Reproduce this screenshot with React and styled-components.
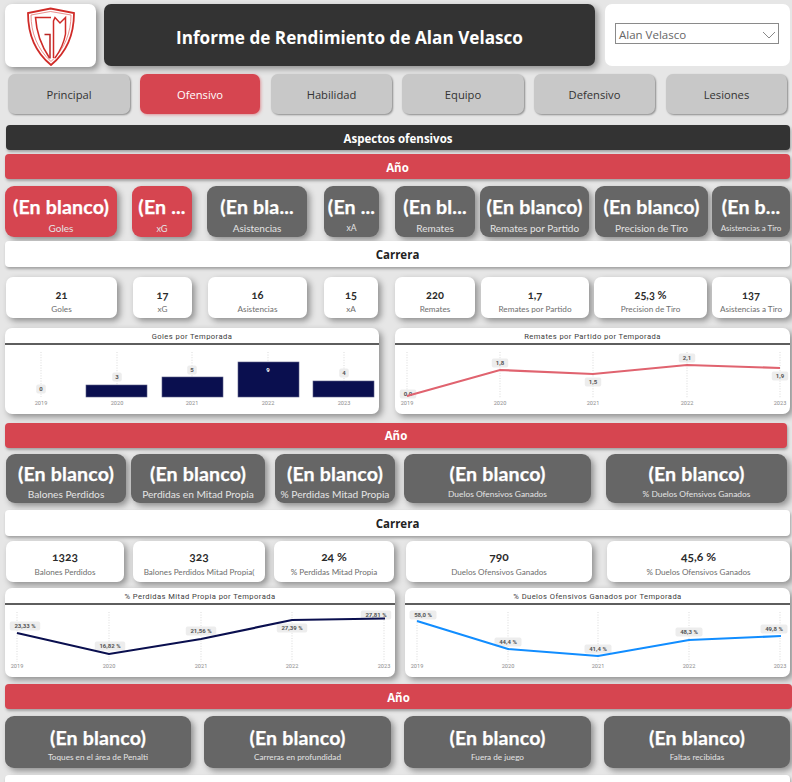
import React from "react";
import styled, { createGlobalStyle } from "styled-components";

const Global = createGlobalStyle`
  html, body { margin: 0; padding: 0; height: 782px; overflow: hidden; background: #e6e6e6; }
  * { box-sizing: border-box; }
  body { font-family: "Open Sans", "Noto Sans", sans-serif; }
`;

const RED = "#d64550";
const DARK = "#333333";
const GREY = "#666666";
const SHADOW = "3px 3px 6px rgba(0,0,0,.38)";

const Page = styled.div`
  width: 792px;
  height: 782px;
  overflow: hidden;
  display: flex;
  flex-direction: column;
`;

const Row = styled.div`
  display: flex;
  flex: none;
  height: ${(p) => p.$h}px;
  margin-top: ${(p) => p.$top}px;
`;

const LogoCard = styled.div`
  width: 91px;
  height: 63px;
  margin-left: 5px;
  background: #fff;
  border-radius: 7px;
  box-shadow: ${SHADOW};
  display: flex;
  align-items: center;
  justify-content: center;
`;

const TitleCard = styled.div`
  width: 491px;
  height: 62px;
  margin-left: 8px;
  background: ${DARK};
  border-radius: 7px;
  box-shadow: ${SHADOW};
  color: #fff;
  font-size: 17.15px;
  font-weight: 700;
  padding-top: 5px;
  display: flex;
  align-items: center;
  justify-content: center;
`;

const FilterCard = styled.div`
  width: 185px;
  height: 62px;
  margin-left: 10px;
  background: #fff;
  border-radius: 7px;
  padding: 19px 11px 0 10px;
`;

const Select = styled.div`
  height: 21px;
  border: 1px solid #8a8a8a;
  color: #666;
  font-size: 11.5px;
  line-height: 19px;
  padding: 2px 2px 0 3px;
  display: flex;
  justify-content: space-between;
  align-items: center;
`;

const Tab = styled.div`
  width: ${(p) => p.$w}px;
  margin-left: ${(p) => p.$left}px;
  border-radius: 7px;
  background: ${(p) => (p.$active ? RED : "#c8c8c8")};
  color: ${(p) => (p.$active ? "#fff" : "#333")};
  box-shadow: ${(p) => (p.$active ? "1px 1px 3px rgba(214,69,80,.5)" : "1px 1px 2px rgba(0,0,0,.4)")};
  font-size: 11.2px;
  display: flex;
  align-items: center;
  justify-content: center;
`;

const Bar = styled.div`
  flex: none;
  width: ${(p) => p.$w}px;
  height: ${(p) => p.$h}px;
  margin-top: ${(p) => p.$top}px;
  margin-left: ${(p) => p.$left}px;
  border-radius: 4px;
  background: ${(p) => p.$bg};
  color: ${(p) => p.$fg};
  font-size: 11.5px;
  font-weight: 700;
  padding-top: ${(p) => p.$pt}px;
  box-shadow: 1px 2px 3px rgba(0,0,0,.3);
  display: flex;
  align-items: center;
  justify-content: center;
`;

const Kpi = styled.div`
  width: ${(p) => p.$w}px;
  margin-left: ${(p) => p.$left}px;
  border-radius: 9px;
  background: ${(p) => p.$bg};
  color: #fff;
  box-shadow: ${SHADOW};
  display: flex;
  flex-direction: column;
  align-items: center;
  padding-top: ${(p) => p.$pad}px;
  overflow: hidden;
`;

const KpiValue = styled.div`
  font-family: "Lato", sans-serif;
  font-size: 19.6px;
  font-weight: 700;
  letter-spacing: 0.15px;
  -webkit-text-stroke: 0.25px #fff;
  line-height: 24px;
  white-space: nowrap;
`;

const KpiLabel = styled.div`
  font-family: "Lato", sans-serif;
  font-size: ${(p) => p.$size}px;
  line-height: 13px;
  margin-top: ${(p) => p.$gap}px;
  color: #e4e4e4;
  white-space: nowrap;
`;

const Stat = styled.div`
  width: ${(p) => p.$w}px;
  margin-left: ${(p) => p.$left}px;
  background: #fff;
  border-radius: 7px;
  box-shadow: ${SHADOW};
  display: flex;
  flex-direction: column;
  align-items: center;
  padding-top: ${(p) => p.$pad}px;
`;

const StatValue = styled.div`
  font-family: "Lato", sans-serif;
  font-variant-numeric: oldstyle-nums;
  font-feature-settings: "onum";
  font-size: ${(p) => p.$size}px;
  font-weight: 700;
  line-height: 15px;
  color: #2b2b2b;
`;

const StatLabel = styled.div`
  font-family: "Lato", sans-serif;
  font-size: ${(p) => p.$size}px;
  line-height: 12px;
  margin-top: ${(p) => p.$gap}px;
  color: #6e6e6e;
  white-space: nowrap;
`;

const ChartCard = styled.div`
  width: ${(p) => p.$w}px;
  margin-left: ${(p) => p.$left}px;
  background: #fff;
  border-radius: 7px;
  box-shadow: ${SHADOW};
  display: flex;
  flex-direction: column;
  overflow: hidden;
`;

const ChartTitle = styled.div`
  height: 15px;
  flex: none;
  font-family: "Roboto", sans-serif;
  font-size: 7.6px;
  font-weight: 400;
  letter-spacing: .42px;
  line-height: 17px;
  color: #3c3c3c;
  text-align: center;
  border-bottom: 2px solid #5e5e5e;
  box-sizing: content-box;
`;

const Plot = styled.svg`
  display: block;
  flex: 1;
  width: 100%;
  min-height: 0;
`;

const PillText = styled.text`
  font-family: "Roboto", sans-serif;
  font-size: 6px;
  font-weight: 700;
  text-anchor: middle;
  fill: ${(p) => p.$fill || "#555"};
`;

const Year = styled.text`
  font-family: "Roboto", sans-serif;
  font-size: 5.6px;
  text-anchor: middle;
  fill: #8c8c8c;
`;

const Logo = () => (
  <svg width="50" height="60" viewBox="26 5 50 60" fill="none">
    <path d="M50.5 7.5 L74 12 C74 32 67 51 51 64 C35 51 28 32 28 12 Z" stroke="#d02b28" strokeWidth="1.8" fill="#fff" />
    <path d="M50.5 10.5 L71 14 C71 31 65 48 51 60.5 C37 48 31 31 31 14 Z" stroke="#e0605c" strokeWidth="0.7" />
    <path d="M51 16.5 H35.5 C36.5 32 42 46 49.5 57" stroke="#cf2a27" strokeWidth="1.6" />
    <path d="M44.5 33.5 H50 V57.5" stroke="#b92523" strokeWidth="1.5" />
    <path d="M53.5 57 V20 L55 16.5 L60 22 L65.5 16.5 V33 C64 42 60 50 55 57" stroke="#cf2a27" strokeWidth="1.5" />
  </svg>
);

const Chevron = () => (
  <svg width="14" height="8" viewBox="0 0 14 8" fill="none">
    <path d="M1 1 L7 7 L13 1" stroke="#888" strokeWidth="1" />
  </svg>
);

const Chart = ({ x, y, w, h, left, title, xs, yTop, yBottom, yearY, bars, line, color, labels }) => {
  const years = ["2019", "2020", "2021", "2022", "2023"];
  return (
    <ChartCard $w={w} $left={left}>
      <ChartTitle>{title}</ChartTitle>
      <Plot viewBox={`${x} ${y + 17} ${w} ${h - 17}`}>
        {xs.map((gx) => (
          <line key={gx} x1={gx} x2={gx} y1={yTop} y2={yBottom} stroke="#d2d2d2" strokeWidth="0.8" strokeDasharray="1 1.6" />
        ))}
        {bars &&
          bars.map((b) => (
            <rect key={b.x} x={b.x} y={b.y} width={61} height={yBottom - b.y} fill="#0a0f4f" stroke="#5a5e86" strokeWidth="0.6" />
          ))}
        {labels.map((l) => {
          const bw = l.t.length * 3.5 + 6;
          return (
            <g key={l.t}>
              {!l.white && <rect x={l.x - bw / 2} y={l.y - 4.5} width={bw} height={9} rx="2" fill="#ececec" opacity=".92" />}
              <PillText x={l.x} y={l.y + 2.2} $fill={l.white ? "#fff" : undefined}>{l.t}</PillText>
            </g>
          );
        })}
        {line && (
          <polyline points={line.map((p) => p.join(",")).join(" ")} fill="none" stroke={color} strokeWidth="2.2" />
        )}
        {xs.map((gx, i) => (
          <Year key={gx} x={gx} y={yearY}>{years[i]}</Year>
        ))}
      </Plot>
    </ChartCard>
  );
};

const kpis1 = [
  { v: "(En blanco)", l: "Goles", w: 112, left: 5, bg: RED, s: 10 },
  { v: "(En ...", l: "xG", w: 60, left: 15, bg: RED, s: 9.2 },
  { v: "(En bla...", l: "Asistencias", w: 100, left: 15, bg: GREY, s: 10 },
  { v: "(En ...", l: "xA", w: 55, left: 17, bg: GREY, s: 8.6 },
  { v: "(En bl...", l: "Remates", w: 80, left: 16, bg: GREY, s: 10 },
  { v: "(En blanco)", l: "Remates por Partido", w: 109, left: 5, bg: GREY, s: 10 },
  { v: "(En blanco)", l: "Precision de Tiro", w: 113, left: 6, bg: GREY, s: 10 },
  { v: "(En b...", l: "Asistencias a Tiro", w: 78, left: 4, bg: GREY, s: 8 },
];
const stats1 = [
  { v: "21", l: "Goles", w: 111, left: 6 },
  { v: "17", l: "xG", w: 59, left: 16 },
  { v: "16", l: "Asistencias", w: 99, left: 16 },
  { v: "15", l: "xA", w: 54, left: 17 },
  { v: "220", l: "Remates", w: 80, left: 17 },
  { v: "1,7", l: "Remates por Partido", w: 108, left: 6 },
  { v: "25,3 %", l: "Precision de Tiro", w: 113, left: 5 },
  { v: "137", l: "Asistencias a Tiro", w: 78, left: 5 },
];
const kpis2 = [
  { v: "(En blanco)", l: "Balones Perdidos", w: 120, left: 6, s: 10.2 },
  { v: "(En blanco)", l: "Perdidas en Mitad Propia", w: 134, left: 5, s: 10.2 },
  { v: "(En blanco)", l: "% Perdidas Mitad Propia", w: 120, left: 10, s: 10.2 },
  { v: "(En blanco)", l: "Duelos Ofensivos Ganados", w: 187, left: 9, s: 8.4 },
  { v: "(En blanco)", l: "% Duelos Ofensivos Ganados", w: 181, left: 15, s: 8.4 },
];
const stats2 = [
  { v: "1323", l: "Balones Perdidos", w: 118, left: 6 },
  { v: "323", l: "Balones Perdidos Mitad Propia(", w: 132, left: 9 },
  { v: "24 %", l: "% Perdidas Mitad Propia", w: 120, left: 9 },
  { v: "790", l: "Duelos Ofensivos Ganados", w: 186, left: 12 },
  { v: "45,6 %", l: "% Duelos Ofensivos Ganados", w: 183, left: 15 },
];
const kpis3 = [
  { l: "Toques en el área de Penalti", w: 186, left: 5 },
  { l: "Carreras en profundidad", w: 187, left: 13 },
  { l: "Fuera de juego", w: 187, left: 13 },
  { l: "Faltas recibidas", w: 186, left: 13 },
];
const tabs = [
  ["Principal", 122, 8],
  ["Ofensivo", 120, 10],
  ["Habilidad", 121, 11],
  ["Equipo", 122, 10],
  ["Defensivo", 121, 10],
  ["Lesiones", 121, 11],
];

export default function App() {
  return (
    <Page>
      <Global />
      <Row $h={63} $top={4}>
        <LogoCard><Logo /></LogoCard>
        <TitleCard>Informe de Rendimiento de Alan Velasco</TitleCard>
        <FilterCard>
          <Select>
            <span>Alan Velasco</span>
            <Chevron />
          </Select>
        </FilterCard>
      </Row>
      <Row $h={40} $top={7}>
        {tabs.map(([t, w, left]) => (
          <Tab key={t} $w={w} $left={left} $active={t === "Ofensivo"}>{t}</Tab>
        ))}
      </Row>
      <Bar $w={784} $h={25} $top={11} $left={6} $pt={2} $bg={DARK} $fg="#fff">Aspectos ofensivos</Bar>
      <Bar $w={785} $h={25} $top={4} $left={5} $pt={2} $bg={RED} $fg="#fff">Año</Bar>
      <Row $h={51} $top={7}>
        {kpis1.map((k) => (
          <Kpi key={k.l} $w={k.w} $left={k.left} $bg={k.bg} $pad={9}>
            <KpiValue>{k.v}</KpiValue>
            <KpiLabel $size={k.s} $gap={3}>{k.l}</KpiLabel>
          </Kpi>
        ))}
      </Row>
      <Bar $w={785} $h={26} $top={4} $left={5} $pt={0} $bg="#fff" $fg="#222">Carrera</Bar>
      <Row $h={41} $top={10}>
        {stats1.map((s) => (
          <Stat key={s.l} $w={s.w} $left={s.left} $pad={10}>
            <StatValue $size={11}>{s.v}</StatValue>
            <StatLabel $size={8.2} $gap={1}>{s.l}</StatLabel>
          </Stat>
        ))}
      </Row>
      <Row $h={86} $top={10}>
        <Chart
          x={5} y={328} w={374} h={86} left={5} title="Goles por Temporada"
          xs={[41, 117, 192, 268, 344]} yTop={352} yBottom={397} yearY={405}
          bars={[{ x: 86, y: 385 }, { x: 162, y: 377 }, { x: 238, y: 362 }, { x: 313, y: 381 }]}
          labels={[
            { t: "0", x: 41, y: 389 }, { t: "3", x: 117, y: 377 }, { t: "5", x: 192, y: 370 },
            { t: "9", x: 268, y: 370, white: true }, { t: "4", x: 344, y: 373 },
          ]}
        />
        <Chart
          x={395} y={328} w={395} h={86} left={16} title="Remates por Partido por Temporada"
          xs={[407, 500, 593, 687, 780]} yTop={352} yBottom={398} yearY={405} color="#e0636f"
          line={[[407, 396], [500, 370], [593, 374], [687, 365], [780, 368]]}
          labels={[
            { t: "0,0", x: 408, y: 394 }, { t: "1,8", x: 500, y: 363 }, { t: "1,5", x: 593, y: 382 },
            { t: "2,1", x: 687, y: 358 }, { t: "1,9", x: 780, y: 376 },
          ]}
        />
      </Row>
      <Bar $w={782} $h={25} $top={9} $left={5} $pt={0} $bg={RED} $fg="#fff">Año</Bar>
      <Row $h={49} $top={6}>
        {kpis2.map((k) => (
          <Kpi key={k.l} $w={k.w} $left={k.left} $bg={GREY} $pad={8}>
            <KpiValue>{k.v}</KpiValue>
            <KpiLabel $size={k.s} $gap={2}>{k.l}</KpiLabel>
          </Kpi>
        ))}
      </Row>
      <Bar $w={785} $h={26} $top={7} $left={5} $pt={0} $bg="#fff" $fg="#222">Carrera</Bar>
      <Row $h={41} $top={5}>
        {stats2.map((s) => (
          <Stat key={s.l} $w={s.w} $left={s.left} $pad={8}>
            <StatValue $size={12}>{s.v}</StatValue>
            <StatLabel $size={8.1} $gap={2}>{s.l}</StatLabel>
          </Stat>
        ))}
      </Row>
      <Row $h={89} $top={6}>
        <Chart
          x={5} y={588} w={390} h={89} left={5} title="% Perdidas Mitad Propia por Temporada"
          xs={[17, 109, 201, 292, 384]} yTop={612} yBottom={662} yearY={668} color="#0a0f4f"
          line={[[17, 633], [109, 654], [201, 639], [292, 620], [385, 618.5]]}
          labels={[
            { t: "23,33 %", x: 25, y: 626 }, { t: "16,82 %", x: 110, y: 646 }, { t: "21,56 %", x: 201, y: 631 },
            { t: "27,39 %", x: 292, y: 628 }, { t: "27,81 %", x: 376, y: 615 },
          ]}
        />
        <Chart
          x={405} y={588} w={385} h={89} left={10} title="% Duelos Ofensivos Ganados por Temporada"
          xs={[417, 508, 598, 689, 780]} yTop={612} yBottom={662} yearY={668} color="#118dff"
          line={[[417, 621], [508, 649], [598, 656], [689, 640], [781, 636]]}
          labels={[
            { t: "58,0 %", x: 423, y: 615 }, { t: "44,4 %", x: 508, y: 642 }, { t: "41,4 %", x: 598, y: 649 },
            { t: "48,3 %", x: 689, y: 632 }, { t: "49,8 %", x: 774, y: 629 },
          ]}
        />
      </Row>
      <Bar $w={787} $h={25} $top={7} $left={5} $pt={2} $bg={RED} $fg="#fff">Año</Bar>
      <Row $h={52} $top={7}>
        {kpis3.map((k) => (
          <Kpi key={k.l} $w={k.w} $left={k.left} $bg={GREY} $pad={10}>
            <KpiValue>(En blanco)</KpiValue>
            <KpiLabel $size={8.2} $gap={1}>{k.l}</KpiLabel>
          </Kpi>
        ))}
      </Row>
      <Bar $w={785} $h={26} $top={7} $left={5} $pt={0} $bg="#fff" $fg="#222" />
    </Page>
  );
}
